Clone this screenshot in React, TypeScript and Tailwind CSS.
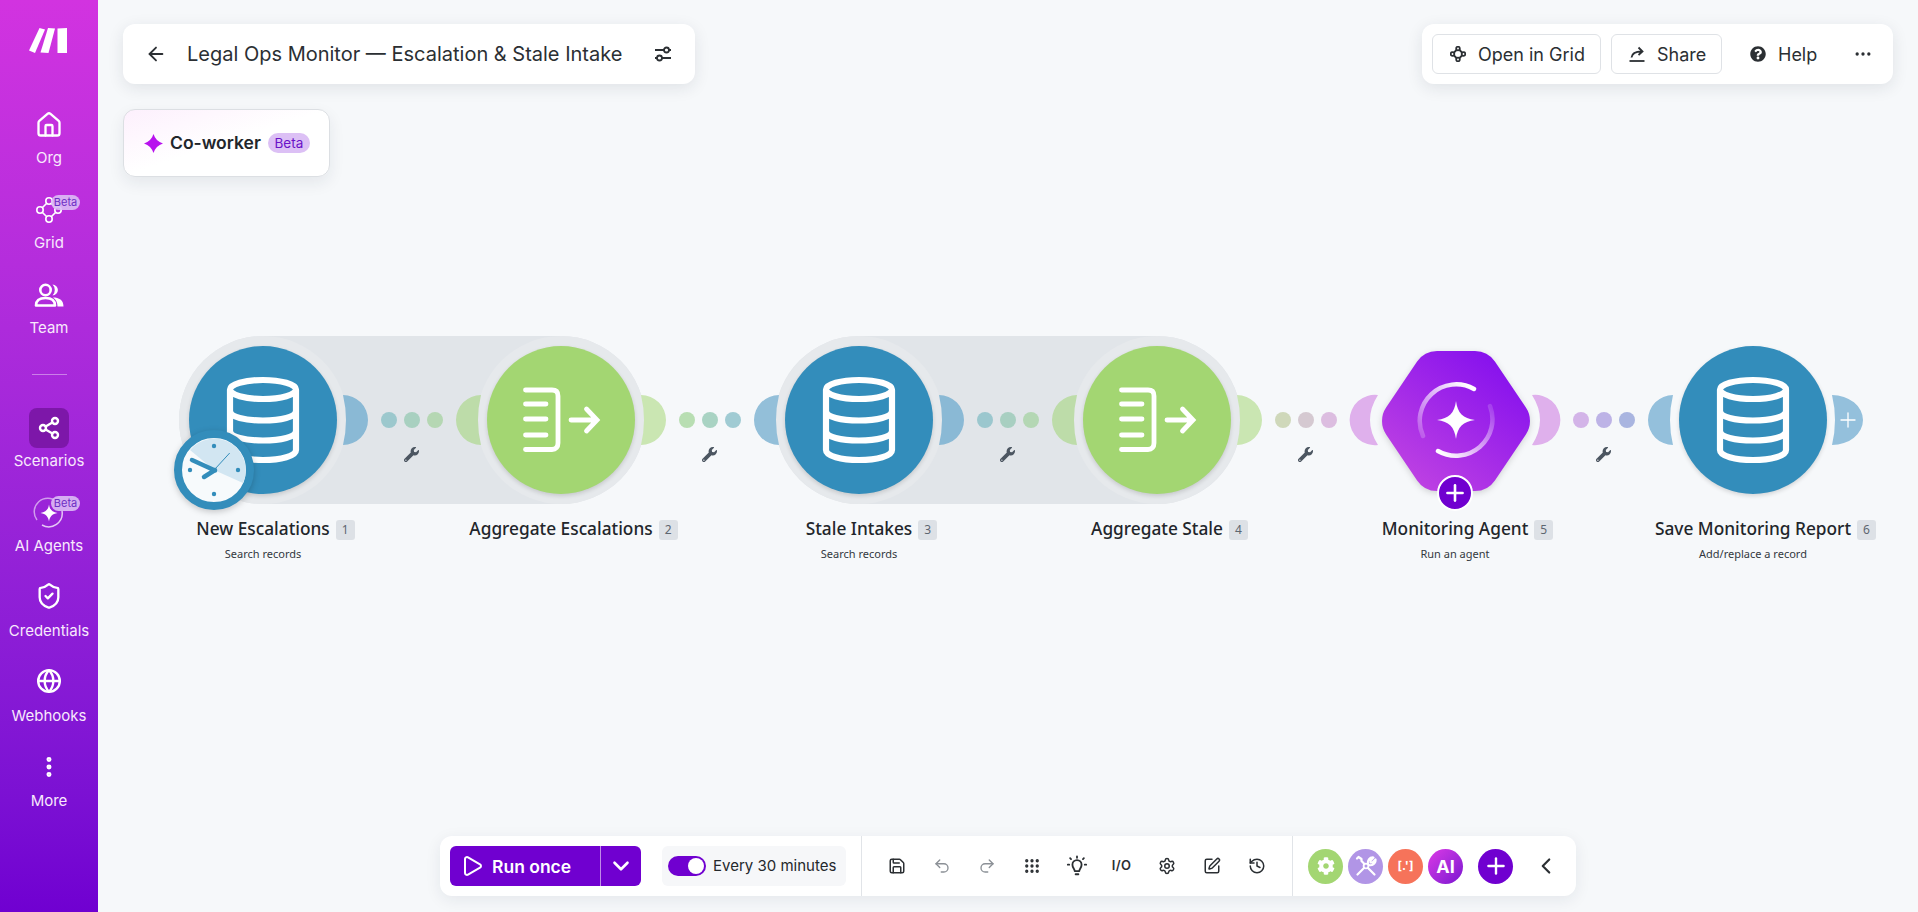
import { ChevronDown, ChevronLeft, EllipsisVertical, Globe, Grip, History, House, Ellipsis, Plus, Redo2, Save, Settings, Share2, ShieldCheck, SquarePen, Undo2, ArrowLeft, Play } from 'lucide-react'
import type { ReactNode } from 'react'
import { FaCog, FaQuestionCircle, FaWrench } from 'react-icons/fa'

const Star = ({ className, fill = 'white' }: { className?: string; fill?: string }) => (
  <svg viewBox="0 0 40 40" className={className}>
    <path d="M20 0C23 10 30 17 40 20C30 23 23 30 20 40C17 30 10 23 0 20C10 17 17 10 20 0Z" fill={fill} />
  </svg>
)

const MakeLogo = () => (
  <svg viewBox="0 0 38 25" className="h-[25px] w-[38px]" fill="white">
    <path d="M10.5 0L16 1.5L6 25L0 22.5Z" />
    <path d="M19 0L26 0.5L19.500 25L11.5 24.5Z" />
    <path d="M28.500 0.5L38 0V25H28.500Z" />
  </svg>
)

const GridIcon = () => (
  <svg viewBox="0 0 32 30" className="h-[30px] w-[32px]" fill="none" stroke="white" strokeWidth="1.6">
    <path d="M14 8L9 13M18 8L23 13M9 17L14 22M23 17L18 22" />
    <circle cx="16" cy="6" r="3.200" />
    <circle cx="7" cy="15" r="3.200" />
    <circle cx="16" cy="24" r="3.200" />
    <circle cx="25" cy="15" r="3.200" />
  </svg>
)

const TeamIcon = () => (
  <svg viewBox="0 0 30 24" className="h-[24px] w-[30px]">
    <circle cx="11.5" cy="7" r="5.2" fill="none" stroke="white" strokeWidth="2.6" />
    <path d="M18.5 1.6a5.4 5.4 0 0 1 0 10.8a7.5 7.5 0 0 0 0-10.8Z" fill="white" />
    <path d="M2 22.5C2 17 6 15 11.5 15S21 17 21 22.5Z" fill="none" stroke="white" strokeWidth="2.6" strokeLinejoin="round" />
    <path d="M19 14.5C25 14.5 29.5 17 29.5 23.5H23.5C23.5 19.5 22 16.5 19 14.5Z" fill="white" />
  </svg>
)

const AgentIcon = () => (
  <svg viewBox="0 0 32 32" className="h-[32px] w-[32px]" fill="none" stroke="white" strokeWidth="1.5">
    <path d="M24 5A13.5 13.5 0 0 0 4 23" opacity=".55" />
    <path d="M9 28A13.5 13.5 0 0 0 29 14" opacity=".75" />
    <path d="M16 7.5C16.8 12.5 19 15 24.500 16C19 17 16.800 19.500 16 24.500C15.200 19.500 13 17 7.500 16C13 15 15.200 12.500 16 7.500Z" fill="white" stroke="none" />
  </svg>
)

const BulbIcon = () => (
  <svg viewBox="0 0 24 24" className="h-[22px] w-[22px]" fill="none" stroke="currentColor" strokeWidth="2" strokeLinecap="round">
    <path d="M9.500 17.500C9.500 15 7 14 7 10.500a5 5 0 0 1 10 0C17 14 14.500 15 14.500 17.500Z" strokeLinejoin="round" />
    <path d="M10.500 21H13.500M12 1.500V3M4.500 3.500L5.500 4.500M19.500 3.500L18.500 4.500M2 10.500H3.500M20.500 10.500H22" />
  </svg>
)

const ToolsIcon = () => (
  <svg viewBox="0 0 24 24" className="h-[24px] w-[24px]" fill="none" stroke="white" strokeWidth="2.200" strokeLinecap="round" strokeLinejoin="round">
    <path d="M3 4.500L4.500 3L7.500 5V7L10 9.500M14 14L20.500 20.500" />
    <path d="M10 14L3.500 20.500" />
    <path d="M14 10C13 7 15.500 3 19.500 3.500L16.500 6.500V8.500H18.500L21.500 5.500C22 9.500 18 12 15 11" />
    <circle cx="12" cy="12" r="2.400" strokeWidth="1.800" />
  </svg>
)

const NavBeta = ({ top }: { top: string }) => (
  <span className={`absolute left-[51px] flex h-[15px] w-[29px] items-center justify-center rounded-full bg-[#dcbdf5]/90 text-[11px] leading-none text-[#6d2fc4] ${top}`}>
    Beta
  </span>
)

const navTop = [
  { label: 'Org', icon: <House size={28} strokeWidth={2} /> },
  { label: 'Grid', icon: <GridIcon />, beta: 'top-[5px]' },
  { label: 'Team', icon: <TeamIcon /> },
]

const navBottom = [
  { label: 'Scenarios', icon: <Share2 size={24} strokeWidth={2.4} />, active: true },
  { label: 'AI Agents', icon: <AgentIcon />, beta: 'top-[3px]' },
  { label: 'Credentials', icon: <ShieldCheck size={28} strokeWidth={2} className="-translate-y-0.5" /> },
  { label: 'Webhooks', icon: <Globe size={26} strokeWidth={2.2} className="-translate-y-0.5" /> },
  { label: 'More', icon: <EllipsisVertical size={26} strokeWidth={2.6} className="-translate-y-px" /> },
]

type NavProps = { label: string; icon: ReactNode; beta?: string; active?: boolean }

const NavItem = ({ label, icon, beta, active }: NavProps) => (
  <div className="relative flex h-[85px] w-full flex-col items-center">
    <div className={`flex h-10 w-10 items-center justify-center rounded-lg ${active ? 'bg-[#7d17a9]' : ''}`}>{icon}</div>
    {beta && <NavBeta top={beta} />}
    <span className="mt-[3px] text-[15px] leading-5 text-[#f8e9fc]">{label}</span>
  </div>
)

const Sidebar = () => (
  <aside className="relative flex h-full w-[98px] shrink-0 flex-col items-center bg-gradient-to-b from-[#d233e0] to-[#7000d1] text-white">
    <div className="absolute left-[29px] top-[28px]">
      <MakeLogo />
    </div>
    <nav className="flex w-full flex-col items-center pt-[105px]">
      {navTop.map((n) => (
        <NavItem key={n.label} {...n} />
      ))}
      <div className="mb-[33px] mt-[14px] h-px w-[35px] bg-white/40" />
      {navBottom.map((n) => (
        <NavItem key={n.label} {...n} />
      ))}
    </nav>
  </aside>
)

const DbIcon = () => (
  <svg viewBox="-38 -46 76 92" className="h-[92px] w-[76px]" fill="none" stroke="white" strokeWidth="6.200">
    <ellipse cx="0" cy="-30.500" rx="33" ry="9.500" />
    <path d="M-33 -30V30C-33 36 -18 40 0 40S33 36 33 30V-30" />
    <path d="M-33 -9C-33 -3 -18 0.500 0 0.500S33 -3 33 -9" />
    <path d="M-33 11C-33 17 -18 20.500 0 20.500S33 17 33 11" />
  </svg>
)

const AggregateIcon = () => (
  <svg viewBox="-42 -36 84 72" className="h-[72px] w-[84px]" fill="none" stroke="white" strokeWidth="4.800" strokeLinecap="round">
    <path d="M-35.500 -30H-9C-5 -30 -3 -28 -3 -24V23C-3 27 -5 29.500 -9 29.500H-35.500" />
    <path d="M-35.500 -16H-15M-35.500 -1H-15M-35.500 15H-15" />
    <path d="M10 0H35.500M25.500 -11L36 0L25.500 11" />
  </svg>
)

const AgentNodeIcon = () => (
  <svg viewBox="-40 -40 80 80" className="h-20 w-20" fill="none" strokeLinecap="round">
    <defs>
      <linearGradient id="arcA" gradientUnits="userSpaceOnUse" x1="15" y1="-32" x2="-30" y2="20">
        <stop offset="0" stopColor="white" />
        <stop offset="1" stopColor="white" stopOpacity=".2" />
      </linearGradient>
      <linearGradient id="arcB" gradientUnits="userSpaceOnUse" x1="-18" y1="30" x2="34" y2="-14">
        <stop offset="0" stopColor="white" />
        <stop offset="1" stopColor="white" stopOpacity=".15" />
      </linearGradient>
    </defs>
    <path d="M18 -31A36.500 36.500 0 0 0 -33 16" stroke="url(#arcA)" strokeWidth="4.500" />
    <path d="M-18 31A36.500 36.500 0 0 0 34 -14" stroke="url(#arcB)" strokeWidth="4.500" />
    <path d="M0 -19C1.500 -7 7 -1.500 19 0C7 1.500 1.500 7 0 19C-1.500 7 -7 1.500 -19 0C-7 -1.500 -1.500 -7 0 -19Z" fill="white" />
  </svg>
)

const ClockBadge = () => (
  <svg viewBox="-40 -40 80 80" className="absolute left-[60px] top-[94px] h-20 w-20 drop-shadow-[0_2px_3px_rgba(0,0,0,0.2)]">
    <circle r="36" fill="#f7fafc" stroke="#338dbb" strokeWidth="8" />
    <path d="M0 0L-24 -20A31.500 31.500 0 0 1 29 13Z" fill="#d2e6f2" />
    <circle cx="0" cy="-24" r="2.200" fill="#338dbb" />
    <circle cx="24" cy="0" r="2.200" fill="#338dbb" />
    <circle cx="0" cy="24" r="2.200" fill="#338dbb" />
    <circle cx="-24" cy="0" r="2.200" fill="#338dbb" />
    <path d="M-22 -10L1 0.500M-10 7L1 0" stroke="#338dbb" strokeWidth="4.500" strokeLinecap="round" />
    <path d="M1 -1L15.700 -17" stroke="#338dbb" strokeWidth="1" />
  </svg>
)

const Hexagon = () => (
  <div className="absolute left-[75px] top-[14px] flex h-[140px] w-[149px] items-center justify-center">
    <svg viewBox="-75 -71 150 142" className="absolute left-0 top-0 h-[142px] w-[150px] drop-shadow-[0_2px_3px_rgba(0,0,0,0.15)]">
      <defs>
        <linearGradient id="hexFill" gradientUnits="userSpaceOnUse" x1="50" y1="-65" x2="-50" y2="65">
          <stop offset="0" stopColor="#840fee" />
          <stop offset="1" stopColor="#c043e2" />
        </linearGradient>
      </defs>
      <path d="M-19 -46H19L50 0L19 46H-19L-50 0Z" fill="url(#hexFill)" stroke="url(#hexFill)" strokeWidth="48" strokeLinejoin="round" />
    </svg>
    <div className="relative">
      <AgentNodeIcon />
    </div>
  </div>
)

type ModuleProps = {
  name: string
  index: number
  sub?: string
  color?: string
  icon?: ReactNode
  left?: string
  right?: string
  dots?: string[]
  ring?: boolean
  group?: boolean
  hex?: boolean
  clock?: boolean
  addMore?: boolean
}

const Module = ({ name, index, sub, color, icon, left, right, dots, ring, group, hex, clock, addMore }: ModuleProps) => (
  <div className="relative flex w-[298px] shrink-0 flex-col items-center">
    <div className="relative h-[168px] w-[298px]">
      {group && <div className="absolute left-[65px] top-0 h-[168px] w-[466px] rounded-full bg-[#e1e5e9]" />}
      {ring && <div className="absolute left-[65px] top-0 h-[168px] w-[168px] rounded-full bg-[#e6e9ec]" />}
      <svg viewBox="0 0 298 168" className="absolute left-0 top-0 h-[168px] w-[298px] overflow-visible">
        {left &&
          (hex ? (
            <path d="M72 59A25.200 25.200 0 1 0 72 109Q56 84 72 59Z" fill={left} />
          ) : (
            <path d="M69 59A25 25 0 0 0 69 109Q63 84 69 59Z" fill={left} />
          ))}
        {right &&
          (hex ? (
            <path d="M226 59A25.200 25.200 0 1 1 226 109Q242 84 226 59Z" fill={right} />
          ) : addMore ? (
            <path d="M228 59A31 25 0 0 1 228 109Q234 84 228 59Z" fill={right} />
          ) : (
            <path d="M229 59A25 25 0 0 1 229 109Q235 84 229 59Z" fill={right} />
          ))}
        {dots?.map((c, i) => (
          <circle key={c} cx={275 + i * 23} cy="84" r="8" fill={c} />
        ))}
      </svg>
      {hex ? (
        <Hexagon />
      ) : (
        <div className={`absolute left-[75px] top-[10px] flex h-[148px] w-[148px] items-center justify-center rounded-full shadow-[0_2px_4px_rgba(0,0,0,0.14)] ${color}`}>
          {icon}
        </div>
      )}
      {clock && <ClockBadge />}
      {hex && (
        <div className="absolute left-[131px] top-[139px] flex h-9 w-9 items-center justify-center rounded-full border-2 border-white bg-[#7000d0] text-white">
          <Plus size={26} strokeWidth={2.4} />
        </div>
      )}
      {addMore && <Plus size={24} strokeWidth={1.3} className="absolute left-[232px] top-[72px] text-white" />}
      {dots && <FaWrench size={15} className="absolute left-[290px] top-[111px] text-[#4c5661]" />}
    </div>
    <div className="relative mt-[15px] h-5 whitespace-nowrap font-['Noto_Sans',sans-serif] text-[17.300px] font-medium leading-5 text-[#22262b]">
      {name}
      <span className="absolute left-full top-[1px] ml-[6px] flex h-5 w-[19px] items-center justify-center rounded-[3px] bg-[#dde1e6] text-[12px] font-normal text-[#5d6670]">
        {index}
      </span>
    </div>
    <div className="mt-[5px] h-5 font-['Noto_Sans',sans-serif] text-[11px] leading-5 text-[#33383e]">{sub}</div>
  </div>
)

const toolIcons = [
  { key: 'save', icon: <Save size={18} strokeWidth={2} />, tone: 'text-[#2b2f33]' },
  { key: 'undo', icon: <Undo2 size={18} strokeWidth={1.8} />, tone: 'text-[#8b9096]' },
  { key: 'redo', icon: <Redo2 size={18} strokeWidth={1.8} />, tone: 'text-[#8b9096]' },
  { key: 'grip', icon: <Grip size={18} strokeWidth={2.4} />, tone: 'text-[#2b2f33]' },
  { key: 'bulb', icon: <BulbIcon />, tone: 'text-[#2b2f33]' },
  { key: 'io', icon: <span className="text-[13px] font-semibold tracking-wide">I/O</span>, tone: 'text-[#2b2f33]' },
  { key: 'settings', icon: <Settings size={18} strokeWidth={2} />, tone: 'text-[#2b2f33]' },
  { key: 'note', icon: <SquarePen size={18} strokeWidth={2} />, tone: 'text-[#2b2f33]' },
  { key: 'history', icon: <History size={18} strokeWidth={2} />, tone: 'text-[#2b2f33]' },
]

const Toolbar = () => (
  <div className="mb-4 ml-[342px] mt-auto flex h-[60px] w-[1136px] items-center rounded-xl bg-white text-[#2b2f33] shadow-[0_4px_16px_rgba(30,40,60,0.08)]">
    <div className="flex h-full items-center border-r border-[#e1e4e8] pl-[10px] pr-[15px]">
      <div className="flex h-10 w-[191px] items-center rounded-md bg-[#7000d0] text-white">
        <div className="flex w-[150px] items-center pl-[10px]">
          <Play size={24} strokeWidth={2} />
          <span className="ml-2 pt-[2px] text-[17.500px] font-semibold">Run once</span>
        </div>
        <div className="h-full w-px bg-[#c08ae8]" />
        <div className="flex flex-1 items-center justify-center">
          <ChevronDown size={26} strokeWidth={2.4} />
        </div>
      </div>
      <div className="ml-[21px] flex h-10 w-[184px] items-center rounded-md bg-[#f6f7f9] pl-[6px]">
        <div className="flex h-5 w-[38px] items-center justify-end rounded-full bg-[#7000d0] pr-[2px]">
          <div className="h-4 w-4 rounded-full bg-white" />
        </div>
        <span className="ml-[7px] text-[15px] text-[#24282c]">Every 30 minutes</span>
      </div>
    </div>
    <div className="flex h-full items-center border-r border-[#e1e4e8] pl-[12px] pr-[13px]">
      {toolIcons.map((t) => (
        <div key={t.key} className={`flex w-[45px] items-center justify-center ${t.tone}`}>
          {t.icon}
        </div>
      ))}
    </div>
    <div className="flex items-center gap-[5px] pl-[15px]">
      <div className="flex h-[35px] w-[35px] items-center justify-center rounded-full bg-[#a3d672] text-white">
        <FaCog size={18} />
      </div>
      <div className="flex h-[35px] w-[35px] items-center justify-center rounded-full bg-[#b195e6]">
        <ToolsIcon />
      </div>
      <div className="flex h-[35px] w-[35px] items-center justify-center rounded-full bg-[#f6735a] text-[12px] font-bold text-white">
        [.']
      </div>
      <div className="flex h-[35px] w-[35px] items-center justify-center rounded-full bg-gradient-to-br from-[#dc38e6] to-[#7c0fd0] text-[18px] font-bold text-white">
        AI
      </div>
    </div>
    <div className="ml-[15px] flex h-[35px] w-[35px] items-center justify-center rounded-full bg-[#7000d0] text-white">
      <Plus size={26} strokeWidth={2.2} />
    </div>
    <ChevronLeft size={26} strokeWidth={2} className="ml-[20px] text-[#2b2f33]" />
  </div>
)

const App = () => (
  <div className="flex h-[912px] w-[1918px] overflow-hidden bg-[#f6f8fa] font-['Inter',sans-serif]">
    <Sidebar />
    <main className="flex h-full min-w-0 flex-1 flex-col">
      <div className="flex items-start justify-between pl-[25px] pr-[25px] pt-6">
        <div className="flex flex-col items-start">
          <div className="flex h-[60px] w-[572px] items-center rounded-xl bg-white text-[#2b2f33] shadow-[0_4px_16px_rgba(30,40,60,0.1)]">
            <ArrowLeft size={22} strokeWidth={2} className="ml-[22px]" />
            <span className="ml-[20px] text-[20px] whitespace-nowrap">Legal Ops Monitor — Escalation &amp; Stale Intake</span>
            <svg viewBox="0 0 16 16" className="ml-auto mr-[24px] h-4 w-4" fill="none" stroke="currentColor" strokeWidth="1.8">
              <path d="M0 4H9M14 4H16M0 12H2M7 12H16" />
              <circle cx="11.500" cy="4" r="2.500" />
              <circle cx="4.500" cy="12" r="2.500" />
            </svg>
          </div>
          <div className="mt-[25px] flex h-[68px] w-[207px] items-center rounded-xl border border-[#dcdfe3] bg-gradient-to-br from-[#fdf0fd] via-white to-white pl-5 shadow-[0_6px_16px_rgba(30,40,60,0.08)]">
            <Star className="h-[19px] w-[19px]" fill="#b812ee" />
            <span className="ml-[7px] text-[17.500px] font-semibold text-[#22262b]">Co-worker</span>
            <span className="ml-[7px] flex h-5 w-[42px] items-center justify-center rounded-full bg-[#dcc0f5] text-[13.500px] text-[#6a12c8]">Beta</span>
          </div>
        </div>
        <div className="flex h-[60px] w-[471px] items-center rounded-xl bg-white pl-[10px] text-[#2b2f33] shadow-[0_4px_16px_rgba(30,40,60,0.1)]">
          <div className="flex h-10 w-[169px] items-center rounded-md border border-[#dfe2e6] pl-[17px] text-[18px]">
            <svg viewBox="0 0 16 16" className="h-4 w-4" fill="none" stroke="currentColor" strokeWidth="1.8">
              <circle cx="8" cy="2.500" r="1.800" />
              <circle cx="2.500" cy="8" r="1.800" />
              <circle cx="13.500" cy="8" r="1.800" />
              <circle cx="8" cy="13.500" r="1.800" />
              <path d="M4 6.500L6.500 4M9.500 4L12 6.500M4 9.500L6.500 12M9.500 12L12 9.500" />
            </svg>
            <span className="ml-[12px] pt-[1px]">Open in Grid</span>
          </div>
          <div className="ml-[10px] flex h-10 w-[111px] items-center rounded-md border border-[#dfe2e6] pl-[17px] text-[18px]">
            <svg viewBox="0 0 16 16" className="h-4 w-4" fill="none" stroke="currentColor" strokeWidth="1.8">
              <path d="M0.500 15H15.500" />
              <path d="M2.500 11.500C3 7.500 6 5.500 12.500 5.500M9.500 1.500L13.500 5.500L9.500 9" />
            </svg>
            <span className="ml-[12px] pt-[1px]">Share</span>
          </div>
          <FaQuestionCircle size={16} className="ml-[28px]" />
          <span className="ml-[12px] pt-[1px] text-[18px]">Help</span>
          <Ellipsis size={20} strokeWidth={2} className="ml-[36px]" />
        </div>
      </div>
      <div className="ml-4 mt-[159px] flex">
        <Module
          name="New Escalations"
          index={1}
          sub="Search records"
          color="bg-[#338dbb]"
          icon={<DbIcon />}
          right="#8ab9d5"
          dots={['#9cc8cd', '#a8d0c0', '#b5d7b3']}
          ring
          group
          clock
        />
        <Module
          name="Aggregate Escalations"
          index={2}
          color="bg-[#a3d672]"
          icon={<AggregateIcon />}
          left="#bddca9"
          right="#cae6b2"
          dots={['#b8deb2', '#a9d3c3', '#a0cbd3']}
          ring
        />
        <Module
          name="Stale Intakes"
          index={3}
          sub="Search records"
          color="bg-[#338dbb]"
          icon={<DbIcon />}
          left="#93bfd9"
          right="#8ab9d5"
          dots={['#9bc7ce', '#a8cfc1', '#b4d7b4']}
          ring
          group
        />
        <Module
          name="Aggregate Stale"
          index={4}
          color="bg-[#a3d672]"
          icon={<AggregateIcon />}
          left="#bddca9"
          right="#cae6b2"
          dots={['#cfd8ba', '#d5c9d1', '#dcbde0']}
          ring
        />
        <Module
          name="Monitoring Agent"
          index={5}
          sub="Run an agent"
          left="#dfb0ec"
          right="#dfb0ec"
          dots={['#d3b4e8', '#bdb3e6', '#a9b5e0']}
          hex
        />
        <Module
          name="Save Monitoring Report"
          index={6}
          sub="Add/replace a record"
          color="bg-[#338dbb]"
          icon={<DbIcon />}
          left="#94c0dc"
          right="#94c0dc"
          addMore
        />
      </div>
      <Toolbar />
    </main>
  </div>
)

export default App
